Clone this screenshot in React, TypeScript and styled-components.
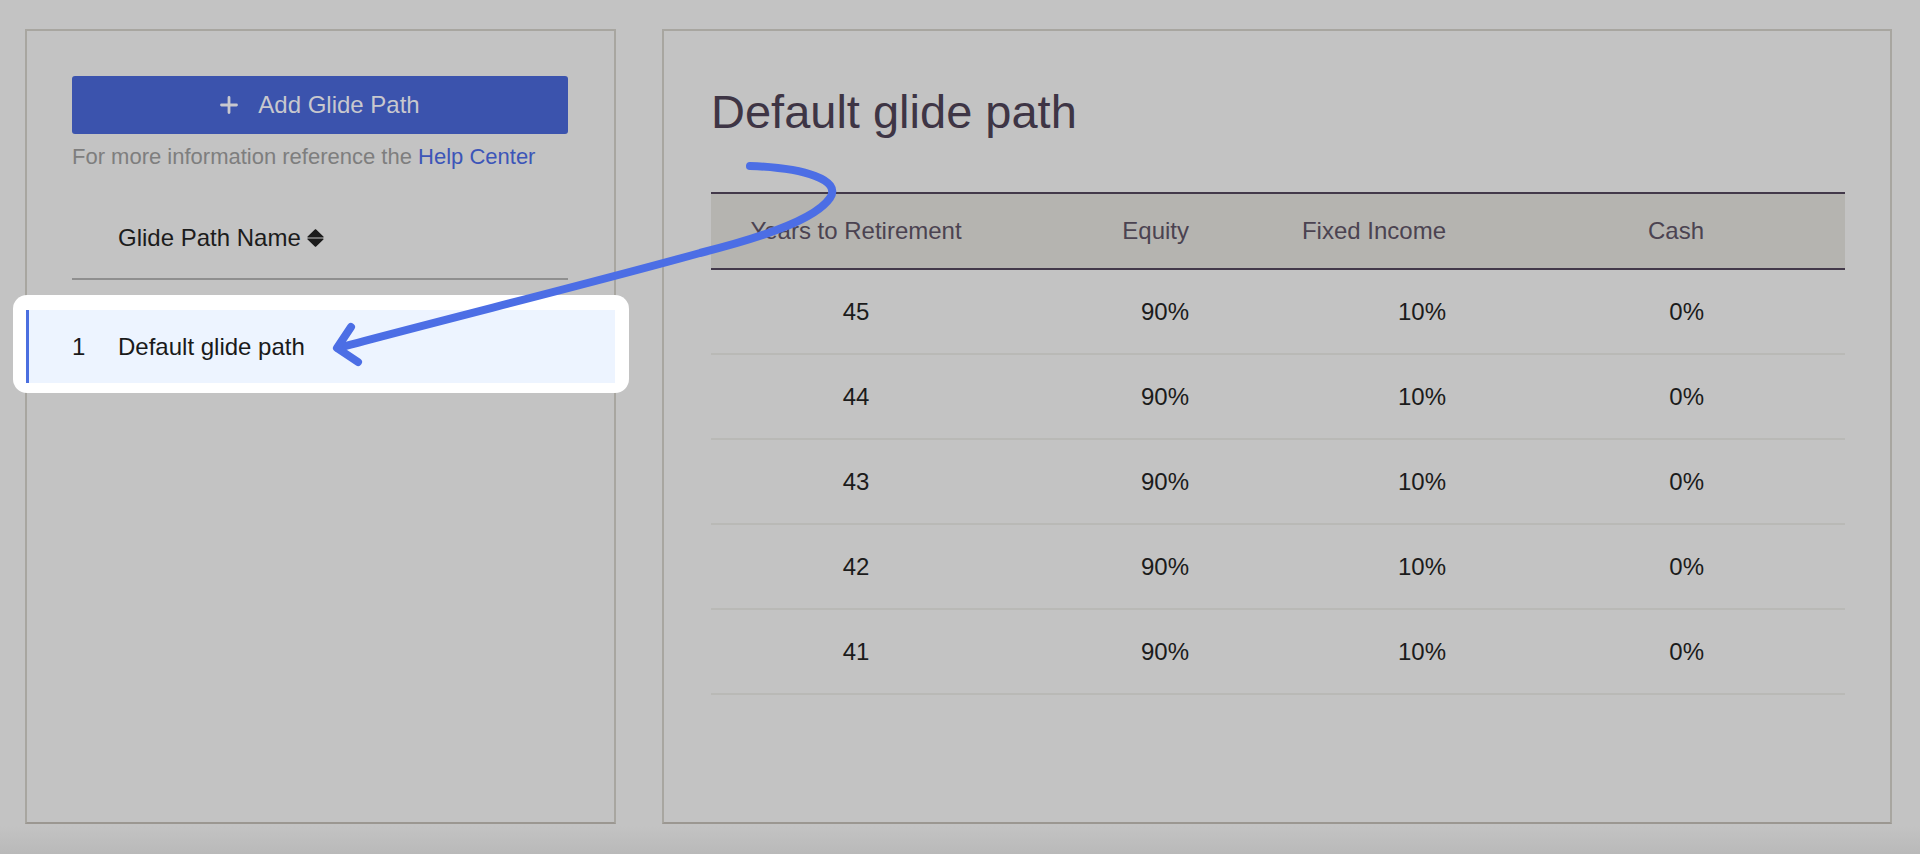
import React from "react";
import styled, { createGlobalStyle } from "styled-components";

const GlobalStyle = createGlobalStyle`
  html, body { margin: 0; padding: 0; }
  body {
    background: #c3c3c3;
    font-family: "Liberation Sans", Arial, sans-serif;
  }
`;

const Page = styled.div`
  position: relative;
  width: 1920px;
  height: 854px;
  box-sizing: border-box;
  padding: 29px 28px 30px 25px;
  display: flex;
  gap: 46px;
  background: linear-gradient(to bottom, #c3c3c3 0, #c3c3c3 826px, #b9b9b9 854px);
  overflow: hidden;
`;

const Panel = styled.section<{ $width?: number }>`
  box-sizing: border-box;
  height: 795px;
  border: 2px solid #a8a6a0;
  border-bottom-color: #9b9791;
  background: #c3c3c3;
  ${(p) => (p.$width ? `width: ${p.$width}px; flex: none;` : `flex: 1;`)}
`;

const ListBody = styled.div`
  padding: 45px 46px 0 45px;
`;

const AddButton = styled.button`
  width: 100%;
  height: 58px;
  border: none;
  border-radius: 3px;
  background: #3b53ad;
  color: #c8c8ce;
  font-family: inherit;
  font-size: 24px;
  display: flex;
  align-items: center;
  justify-content: center;
  gap: 20px;
  padding: 0;
  cursor: pointer;
`;

const Helper = styled.p`
  margin: 10px 0 0;
  font-size: 22px;
  line-height: 26px;
  color: #7e7e7e;
  white-space: nowrap;
`;

const HelpLink = styled.a`
  color: #3c55b8;
  text-decoration: none;
`;

const ListHeader = styled.div`
  display: flex;
  align-items: center;
  gap: 6px;
  padding: 54px 0 26px 46px;
  border-bottom: 2px solid #8f8f8f;
  font-size: 24px;
  line-height: 28px;
  color: #1c1c1c;
`;

const Spotlight = styled.div`
  position: relative;
  margin: 30px -47px 0 -46px;
  &::before {
    content: "";
    position: absolute;
    top: -15px;
    bottom: -10px;
    left: -13px;
    right: -14px;
    background: #ffffff;
    border-radius: 14px;
  }
`;

const ListRow = styled.div`
  position: relative;
  height: 73px;
  box-sizing: border-box;
  display: flex;
  align-items: center;
  padding-left: 43px;
  background: #edf4ff;
  border-left: 3px solid #4b6fe0;
  font-size: 24px;
  color: #1a1a1a;
`;

const RowIndex = styled.span`
  width: 46px;
  flex: none;
`;

const DetailBody = styled.div`
  padding: 53px 45px 0 47px;
`;

const Title = styled.h1`
  margin: 0;
  font-size: 47px;
  line-height: 56px;
  font-weight: 400;
  color: #3e3545;
`;

const Table = styled.div`
  margin-top: 52px;
`;

const COLS = "290px 212px 257px 258px 1fr";

const HeadRow = styled.div`
  display: grid;
  grid-template-columns: ${COLS};
  height: 78px;
  box-sizing: border-box;
  align-items: center;
  background: #b5b4b0;
  border-top: 2px solid #43394a;
  border-bottom: 2px solid #43394a;
  font-size: 24px;
  color: #4b4351;
`;

const BodyRow = styled.div`
  display: grid;
  grid-template-columns: ${COLS};
  height: 85px;
  box-sizing: border-box;
  align-items: center;
  border-bottom: 2px solid #b9b9b6;
  font-size: 24px;
  color: #1b1b1b;
`;

const Cell = styled.div<{ $align: "center" | "right" }>`
  text-align: ${(p) => p.$align};
  padding-right: ${(p) => (p.$align === "right" ? "24px" : "0")};
  white-space: nowrap;
`;

const Overlay = styled.svg`
  position: absolute;
  left: 0;
  top: 0;
  pointer-events: none;
`;

const rows = [45, 44, 43, 42, 41];

const PlusIcon = () => (
  <svg width="18" height="18" viewBox="0 0 18 18">
    <path d="M9 1.5V16.5M1.5 9H16.5" stroke="#c8c8ce" strokeWidth="2.8" strokeLinecap="round" />
  </svg>
);

const SortIcon = () => (
  <svg width="17" height="18" viewBox="0 0 17 18">
    <path d="M8.5 0.8 L16 8 L1 8 Z" fill="#1c1c1c" strokeLinejoin="round" stroke="#1c1c1c" strokeWidth="1.2" />
    <path d="M1 10 L16 10 L8.5 17.2 Z" fill="#1c1c1c" strokeLinejoin="round" stroke="#1c1c1c" strokeWidth="1.2" />
  </svg>
);

export default function App() {
  return (
    <>
      <GlobalStyle />
      <Page>
        <Panel $width={591}>
          <ListBody>
            <AddButton>
              <PlusIcon />
              <span>Add Glide Path</span>
            </AddButton>
            <Helper>
              For more information reference the <HelpLink href="#">Help Center</HelpLink>
            </Helper>
            <ListHeader>
              <span>Glide Path Name</span>
              <SortIcon />
            </ListHeader>
            <Spotlight>
              <ListRow>
                <RowIndex>1</RowIndex>
                <span>Default glide path</span>
              </ListRow>
            </Spotlight>
          </ListBody>
        </Panel>
        <Panel>
          <DetailBody>
            <Title>Default glide path</Title>
            <Table>
              <HeadRow>
                <Cell $align="center">Years to Retirement</Cell>
                <Cell $align="right">Equity</Cell>
                <Cell $align="right">Fixed Income</Cell>
                <Cell $align="right">Cash</Cell>
              </HeadRow>
              {rows.map((y) => (
                <BodyRow key={y}>
                  <Cell $align="center">{y}</Cell>
                  <Cell $align="right">90%</Cell>
                  <Cell $align="right">10%</Cell>
                  <Cell $align="right">0%</Cell>
                </BodyRow>
              ))}
            </Table>
          </DetailBody>
        </Panel>
        <Overlay width="1920" height="854" viewBox="0 0 1920 854">
          <path
            d="M750 166 C 805 168, 842 180, 830 198 C 815 220, 760 238, 700 253 C 600 281, 450 318, 338 348"
            fill="none"
            stroke="#4c6ee5"
            strokeWidth="8"
            strokeLinecap="round"
          />
          <path
            d="M351 327 L 337 348 L 358 362"
            fill="none"
            stroke="#4c6ee5"
            strokeWidth="8"
            strokeLinecap="round"
            strokeLinejoin="round"
          />
        </Overlay>
      </Page>
    </>
  );
}
